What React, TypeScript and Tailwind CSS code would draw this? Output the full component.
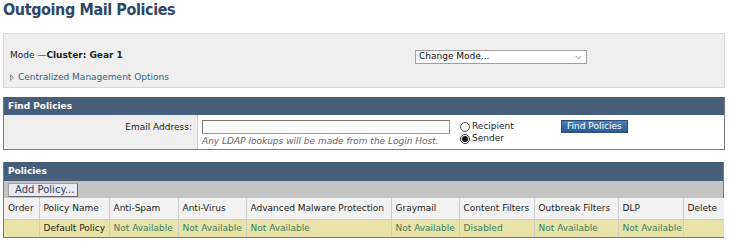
import React from "react";

const cols = [
  { label: "Order", w: 35 },
  { label: "Policy Name", w: 70 },
  { label: "Anti-Spam", w: 69 },
  { label: "Anti-Virus", w: 68 },
  { label: "Advanced Malware Protection", w: 145 },
  { label: "Graymail", w: 68 },
  { label: "Content Filters", w: 75 },
  { label: "Outbreak Filters", w: 84 },
  { label: "DLP", w: 65 },
  { label: "Delete", w: 41 },
];

const row = ["", "Default Policy", "Not Available", "Not Available", "Not Available", "Not Available", "Disabled", "Not Available", "Not Available", ""];

export default function App() {
  return (
    <div
      className="w-[731px] h-[241px] bg-white px-[3px] text-[9px] text-[#222] overflow-hidden"
      style={{ fontFamily: '"DejaVu Sans", Verdana, sans-serif' }}
    >
      <div className="h-[33px]">
        <h1
          className="text-[16px] leading-[19px] font-bold text-[#2f4866] tracking-[-0.4px]"
          style={{ fontFamily: '"DejaVu Sans Condensed", "DejaVu Sans", sans-serif' }}
        >
          Outgoing Mail Policies
        </h1>
      </div>

      <div className="w-[722px] h-[55px] border border-[#dadada] bg-[#efefef] flex">
        <div className="w-[411px] pl-[6px] pt-[15px] flex flex-col gap-[10px]">
          <div className="h-[12px] leading-[12px]">
            Mode —<span className="font-bold">Cluster: Gear 1</span>
          </div>
          <div className="h-[12px] leading-[12px] flex items-center text-[#2d5f88]">
            <svg width="4" height="7" viewBox="0 0 4 7" className="mr-[4px]">
              <path d="M0.5 0.5 L3.5 3.5 L0.5 6.5 Z" fill="#d0d0d0" stroke="#8a8a8a" strokeWidth="0.8" />
            </svg>
            Centralized Management Options
          </div>
        </div>
        <div className="pt-[16px]">
          <div className="w-[172px] h-[14px] bg-white border border-[#a0a0a0] flex items-center justify-between pl-[3px] pr-[4px] text-[#111]">
            <span>Change Mode...</span>
            <svg width="7" height="5" viewBox="0 0 7 5" fill="none" stroke="#888" strokeWidth="0.9">
              <path d="M0.5 0.8 L3.5 3.8 L6.5 0.8" />
            </svg>
          </div>
        </div>
      </div>

      <div className="mt-[9px] w-[722px] border border-[#7a7a7a] border-t-0">
        <div className="h-[18px] bg-[#475e7a] text-white font-bold leading-[18px] pl-[4px]">Find Policies</div>
        <div className="h-[34px] flex">
          <div className="w-[194px] bg-[#efefef] border-r border-[#cfcfcf] text-right pr-[5px] pt-[6px] leading-[12px]">
            Email Address:
          </div>
          <div className="pl-[4px] pt-[5px] w-[262px]">
            <div className="w-[248px] h-[14px] bg-white border border-[#999] border-t-[#777] border-l-[#777]" />
            <div className="italic text-[#666] leading-[12px] mt-[1px]">Any LDAP lookups will be made from the Login Host.</div>
          </div>
          <div className="pt-[6px] flex flex-col gap-[1px]">
            <div className="flex items-center h-[11px] gap-[2px]">
              <span className="w-[10px] h-[10px] rounded-full border border-[#555] bg-white" />
              <span>Recipient</span>
            </div>
            <div className="flex items-center h-[11px] gap-[2px]">
              <span className="w-[10px] h-[10px] rounded-full border border-[#333] bg-white flex items-center justify-center">
                <span className="w-[6px] h-[6px] rounded-full bg-[#111]" />
              </span>
              <span>Sender</span>
            </div>
          </div>
          <div className="ml-[47px] pt-[5px]">
            <div className="w-[67px] h-[13px] bg-gradient-to-b from-[#4c7fb8] to-[#2b5b96] border border-[#2a4d7a] text-white text-center leading-[11px]">
              Find Policies
            </div>
          </div>
        </div>
      </div>

      <div className="mt-[12px] w-[721px] border border-[#7a7a7a] border-t-0">
        <div className="h-[19px] bg-[#475e7a] text-white font-bold leading-[19px] pl-[4px]">Policies</div>
        <div className="h-[17px] bg-[#c4c4c4] pl-[4px] pt-[2px]">
          <div className="w-[70px] h-[14px] bg-[#eaeaf5] border border-[#a0a0b0] border-b-[#666] border-r-[#666] text-[#2e4560] leading-[12px] pl-[6px] text-[10px]">
            Add Policy...
          </div>
        </div>
        <table className="border-collapse table-fixed w-[720px]">
          <colgroup>
            {cols.map((c) => (
              <col key={c.label} style={{ width: c.w }} />
            ))}
          </colgroup>
          <thead>
            <tr className="h-[21px] bg-[#f2f2f2]">
              {cols.map((c, i) => (
                <th
                  key={c.label}
                  className={`font-normal text-left pl-[4px] whitespace-nowrap border-[#cccccc] ${i > 0 ? "border-l" : ""}`}
                >
                  {c.label}
                </th>
              ))}
            </tr>
          </thead>
          <tbody>
            <tr className="h-[18px] bg-[#e8e4a9]">
              {row.map((v, i) => (
                <td
                  key={i}
                  className={`pl-[4px] whitespace-nowrap border-t border-[#cccccc] ${i > 0 ? "border-l" : ""} ${i === 1 ? "text-[#222]" : "text-[#3e7b5c]"}`}
                >
                  {v}
                </td>
              ))}
            </tr>
          </tbody>
        </table>
      </div>
    </div>
  );
}
